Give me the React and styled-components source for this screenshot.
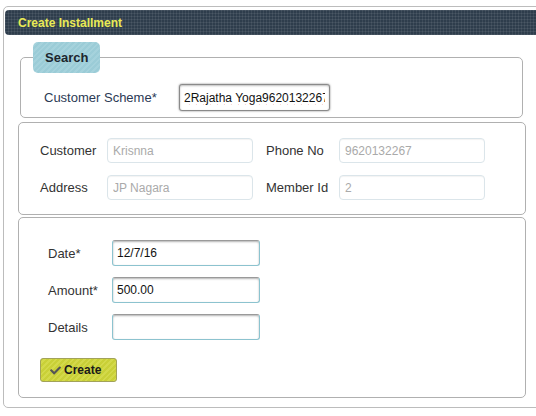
import React from 'react'
import styled, { createGlobalStyle } from 'styled-components';
import { FaCheck } from 'react-icons/fa';

const GlobalStyle = createGlobalStyle`
    html, body {
        margin:0;
        padding:0;
        background:#ffffff;
        overflow:hidden;
    }
    body {
        font-family:"Liberation Sans", Arial, sans-serif;
        font-size:13px;
        color:#333;
    }
`

const Panel = styled.div`
    margin:6px 0 0 3px;
    width:545px;
    border:1px solid #bcbcbc;
    border-radius:5px;
    padding:3px 1px 9px 1px;
    box-sizing:border-box;
`

const TitleBar = styled.div`
    height:25px;
    display:flex;
    align-items:center;
    padding-left:13px;
    border-radius:4px;
    background-color:#2e3d4c;
    background-image:
        linear-gradient(rgba(255,255,255,0.07) 1px, transparent 1px),
        linear-gradient(90deg, rgba(255,255,255,0.07) 1px, transparent 1px);
    background-size:3px 3px;
    color:#e9ea55;
    font-weight:bold;
    font-size:12px;
`

const Group = styled.fieldset`
    margin:${({top}) => top}px 0 0 ${({left}) => left}px;
    width:${({width}) => width}px;
    box-sizing:border-box;
    border:1px solid #b0b0b0;
    border-radius:5px;
    padding:${({pad}) => pad};
    min-inline-size:0;
`

const Tab = styled.legend`
    height:31px;
    line-height:31px;
    padding:0 12px;
    border-radius:5px;
    background-color:#9ccdd8;
    background-image:repeating-linear-gradient(135deg, #9bccd7 0 2px, #a5d2dc 2px 4px);
    color:#1c262e;
    font-weight:bold;
    font-size:13px;
`

const SearchRow = styled.div`
    display:flex;
    align-items:center;
    height:27px;
    margin-top:11px;
`

const SchemeLabel = styled.label`
    width:135px;
    padding-left:11px;
    color:#2b3a55;
`

const SchemeInput = styled.input`
    width:151px;
    height:27px;
    box-sizing:border-box;
    border:1px solid #8a8a8a;
    border-radius:3px;
    box-shadow:0 0 2px #777, inset 0 1px 2px rgba(0,0,0,0.25);
    padding:0 4px;
    font-family:"Liberation Sans", Arial, sans-serif;
    font-size:12px;
    color:#111;
    text-decoration:underline wavy #e03030;
    text-decoration-thickness:1px;
    text-underline-offset:2px;
    outline:none;
`

const InfoGrid = styled.div`
    display:grid;
    grid-template-columns:67px 159px 73px 146px;
    grid-auto-rows:25px;
    row-gap:12px;
    align-items:center;
`

const Label = styled.label`
    color:#333;
    padding-left:${({indent}) => indent || 0}px;
`

const ReadInput = styled.input`
    width:146px;
    height:25px;
    box-sizing:border-box;
    border:1px solid #dbe5ea;
    border-radius:4px;
    box-shadow:inset 0 1px 1px rgba(0,0,0,0.05);
    padding:0 5px;
    background:#fff;
    font-family:"Liberation Sans", Arial, sans-serif;
    font-size:12px;
    color:#aaa;
`

const FormGrid = styled.div`
    display:grid;
    grid-template-columns:72px 148px;
    grid-auto-rows:26px;
    row-gap:11px;
    align-items:center;
`

const EditInput = styled.input`
    width:148px;
    height:26px;
    box-sizing:border-box;
    border:1px solid #8cc3cf;
    border-top-color:#9a9a9a;
    border-radius:3px;
    box-shadow:inset 0 1px 2px rgba(0,0,0,0.3);
    padding:0 4px;
    background:#fff;
    font-family:"Liberation Sans", Arial, sans-serif;
    font-size:12px;
    color:#111;
    outline:none;
`

const CreateBtn = styled.button`
    margin-top:18px;
    width:77px;
    height:24px;
    display:flex;
    align-items:center;
    gap:3px;
    padding:0 0 0 9px;
    border:1px solid #a2a25a;
    border-radius:3px;
    background-color:#cdd43c;
    background-image:repeating-linear-gradient(135deg, #c9d037 0 2px, #d3d94a 2px 4px);
    font-family:"Liberation Sans", Arial, sans-serif;
    font-weight:bold;
    font-size:12px;
    color:#1a1a1a;
    cursor:pointer;
`

const CheckIcon = styled(FaCheck)`
    color:#555;
    font-size:11px;
`

const App = () => {
    return (
        <>
            <GlobalStyle />
            <Panel>
                <TitleBar>Create Installment</TitleBar>
                <Group top={7} left={15} width={503} pad="0 12px 6px 12px">
                    <Tab>Search</Tab>
                    <SearchRow>
                        <SchemeLabel>Customer Scheme*</SchemeLabel>
                        <SchemeInput defaultValue="2Rajatha Yoga9620132267" spellCheck={false} />
                    </SearchRow>
                </Group>
                <Group top={4} left={13} width={508} pad="15px 12px 14px 21px">
                    <InfoGrid>
                        <Label>Customer</Label>
                        <ReadInput defaultValue="Krisnna" disabled />
                        <Label>Phone No</Label>
                        <ReadInput defaultValue="9620132267" disabled />
                        <Label>Address</Label>
                        <ReadInput defaultValue="JP Nagara" disabled />
                        <Label>Member Id</Label>
                        <ReadInput defaultValue="2" disabled />
                    </InfoGrid>
                </Group>
                <Group top={2} left={13} width={508} pad="22px 12px 15px 21px">
                    <FormGrid>
                        <Label indent={8}>Date*</Label>
                        <EditInput defaultValue="12/7/16" />
                        <Label indent={8}>Amount*</Label>
                        <EditInput defaultValue="500.00" />
                        <Label indent={8}>Details</Label>
                        <EditInput defaultValue="" />
                    </FormGrid>
                    <CreateBtn>
                        <CheckIcon />
                        Create
                    </CreateBtn>
                </Group>
            </Panel>
        </>
    )
}

export default App
